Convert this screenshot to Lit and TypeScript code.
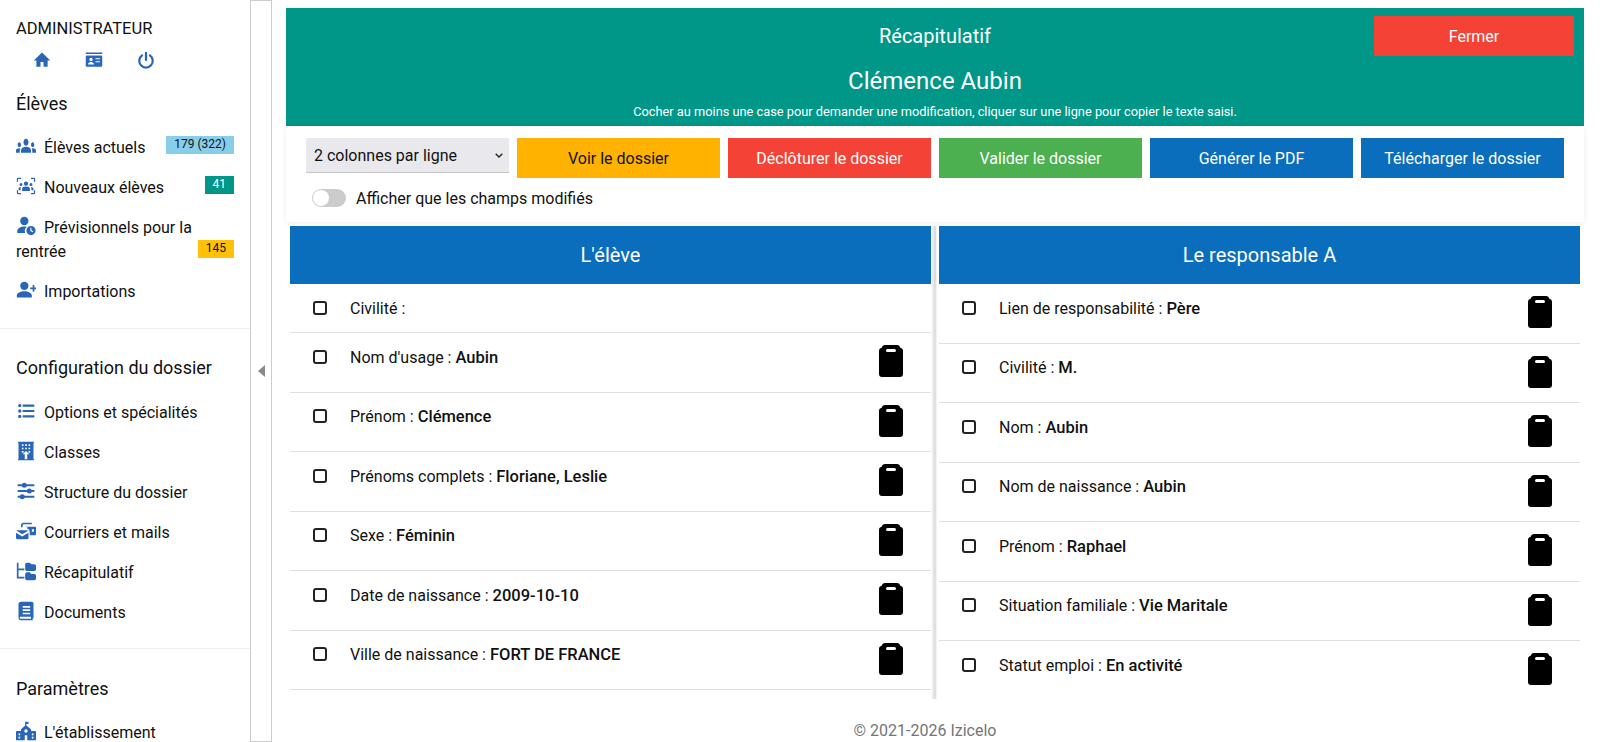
import { LitElement, html, css, svg } from "lit";
import { customElement } from "lit/decorators.js";

// ------ Icônes du menu ----- //
const icons = {
    home: svg`<path d="M10 21v-6.500h4V21h5.500v-8.500H23L12 2 1 12.500h3.500V21z"/>`,
    card: svg`<path fill-rule="evenodd" d="M1 2h22v2H1zM2.500 6h19A1.500 1.500 0 0 1 23 7.500v12a1.500 1.500 0 0 1-1.500 1.500h-19A1.500 1.500 0 0 1 1 19.500v-12A1.500 1.500 0 0 1 2.500 6zM8 9a2.200 2.200 0 1 0 0 4.400A2.200 2.200 0 0 0 8 9zM4 18h8c0-2-1.800-3.200-4-3.200S4 16 4 18zm10-8.500V11h6V9.500zm0 4V15h6v-1.500z"/>`,
    power: svg`<path fill="none" stroke="currentColor" stroke-width="3" stroke-linecap="round" d="M12 2.500V12M6.800 5.800a9 9 0 1 0 10.400 0"/>`,
    groups: svg`<g transform="translate(0 -5) scale(1 1.400)"><path d="M12 12.750c1.630 0 3.070.39 4.240.9 1.080.48 1.760 1.560 1.760 2.730V18H6v-1.610c0-1.180.68-2.260 1.760-2.730 1.170-.52 2.610-.91 4.240-.91zM4 13c1.100 0 2-.9 2-2s-.9-2-2-2-2 .9-2 2 .9 2 2 2zm1.130 1.100C4.760 14.040 4.390 14 4 14c-.99 0-1.930.21-2.780.58C.48 14.900 0 15.620 0 16.430V18h4.500v-1.610c0-.83.23-1.610.63-2.290zM20 13c1.100 0 2-.9 2-2s-.9-2-2-2-2 .9-2 2 .9 2 2 2zm4 3.430c0-.81-.48-1.530-1.220-1.850-.85-.37-1.790-.58-2.780-.58-.39 0-.76.04-1.130.1.400.68.630 1.460.630 2.290V18H24v-1.570zM12 6c1.660 0 3 1.340 3 3s-1.340 3-3 3-3-1.340-3-3 1.340-3 3-3z"/></g>`,
    scan: svg`<path d="M1 7V3.500A1.500 1.500 0 0 1 2.500 2H6v1.500H2.500V7zM18 2h3.500A1.500 1.500 0 0 1 23 3.500V7h-1.500V3.500H18zM1 17h1.500v3.500H6V22H2.500A1.500 1.500 0 0 1 1 20.500zM21.500 17H23v3.500a1.500 1.500 0 0 1-1.500 1.500H18v-1.500h3.500z"/><path d="M12 12.500c1.400 0 2.500.3 3.400.7.800.4 1.300 1.200 1.300 2.100V18H7.300v-2.700c0-.9.500-1.700 1.300-2.100.9-.4 2-.7 3.400-.7zM12 6.500a2.600 2.600 0 1 1 0 5.200 2.600 2.600 0 0 1 0-5.200zM6 8.500a1.800 1.800 0 1 1 0 3.600 1.800 1.800 0 0 1 0-3.600zm12 0a1.800 1.800 0 1 1 0 3.600 1.800 1.800 0 0 1 0-3.600zM3 17v-1.500c0-1.300 1-2.300 3-2.400-.3.600-.4 1.300-.4 2V17zm18 0v-1.500c0-1.300-1-2.300-3-2.400.3.600.4 1.300.4 2V17z"/>`,
    clock: svg`<circle cx="10" cy="6" r="5"/><path d="M10 12.500c1 0 2 .1 2.900.4A7 7 0 0 0 11 20.500H1.500V18c0-3.300 4-5.500 8.500-5.500z"/><path fill-rule="evenodd" d="M18 12a5.500 5.500 0 1 1 0 11 5.500 5.500 0 0 1 0-11zm-.8 2.200v3.700l3 1.500.6-1.200-2.300-1.100v-2.900z"/>`,
    add: svg`<circle cx="10" cy="7" r="5"/><path d="M10 13.500c4.500 0 9 2 9 5V21H1v-2.500c0-3 4.500-5 9-5zM20 6h2v3h2v2h-2v3h-2v-3h-3V9h3z"/>`,
    list: svg`<circle cx="4.500" cy="5.500" r="2"/><circle cx="4.500" cy="12" r="2"/><circle cx="4.500" cy="18.500" r="2"/><path d="M8 4.200h14v2.600H8zM8 10.700h14v2.600H8zM8 17.200h14v2.600H8z"/>`,
    building: svg`<path fill-rule="evenodd" d="M2.500 1h19v1.500H21v19h.5V23h-19v-1.500H3v-19h-.5zM7 4v2h2V4zm4 0v2h2V4zm4 0v2h2V4zM7 8v2h2V8zm4 0v2h2V8zm4 0v2h2V8zM7 12v2h2v-2zm8 0v2h2v-2zm-3 0-4 4h2.500v6h3v-6H16z"/>`,
    tune: svg`<path d="M2 3.800h20v2.400H2zM2 10.800h20v2.400H2zM2 17.800h20v2.400H2z"/><circle cx="10" cy="5" r="3"/><circle cx="16" cy="12" r="3"/><circle cx="7.500" cy="19" r="3"/>`,
    mail: svg`<path d="M6 7.500V5a3 3 0 0 1 3-3h10v2H9a1 1 0 0 0-1 1v2.500z"/><path fill-rule="evenodd" d="M11.500 7H23a1 1 0 0 1 1 1v8a1 1 0 0 1-1 1h-6.500v-4a4 4 0 0 0-3-3.900V8a1 1 0 0 0-2-1zM19 10v3h2.500v-3z"/><path d="M1 11h12a2 2 0 0 1 1.500.7L7.500 16 .3 11.500A1.500 1.500 0 0 1 1 11zM0 14l7.500 4.500L15 14v6a2 2 0 0 1-2 2H2a2 2 0 0 1-2-2z"/>`,
    tree: svg`<path d="M1 2h2v7h7v2H3v8h7v2H1z"/><path d="M13 2h3.500l2 2H22a2 2 0 0 1 2 2v4a2 2 0 0 1-2 2h-9a2 2 0 0 1-2-2V4a2 2 0 0 1 2-2zM13 13.500h3.500l2 2H22a2 2 0 0 1 2 2V21a2 2 0 0 1-2 2h-9a2 2 0 0 1-2-2v-5.500a2 2 0 0 1 2-2z"/>`,
    book: svg`<path fill-rule="evenodd" d="M6 1h13a2 2 0 0 1 2 2v17a1 1 0 0 1-1 1v2H6a3 3 0 0 1-3-3V4a3 3 0 0 1 3-3zm2 5v2h9V6zm0 4v2h9v-2zm0 4v2h9v-2zM5.500 19a1 1 0 0 0 0 2.200H18V19z"/>`,
    school: svg`<path fill-rule="evenodd" d="M11 1h4v2.500h-2.500v2L18 10v2h5a1 1 0 0 1 1 1v10H0V13a1 1 0 0 1 1-1h5v-2l5-4.500zM12 10a2 2 0 1 0 0 4 2 2 0 0 0 0-4zm-1.500 7v6h3v-6zM3 15v2h2v-2zm0 4v2h2v-2zm16-4v2h2v-2zm0 4v2h2v-2z"/>`,
};

const icon = (name: keyof typeof icons, cls = "icon") =>
    html`<svg class=${cls} viewBox="0 0 24 24" fill="currentColor">${icons[name]}</svg>`;

const clipboard = html`<svg class="clip" viewBox="0 0 24 32">
    <path d="M6 0h12c2 0 3 1.500 3.300 2.800C23 3 24 4.500 24 6v23c0 1.800-1.200 3-3 3H3c-1.800 0-3-1.200-3-3V6c0-1.500 1-3 2.700-3.200C3 1.500 4 0 6 0z"/>
    <rect x="7" y="4" width="10" height="3" rx="1.500" fill="#fff"/>
</svg>`;

const eleve = [
    ["Civilité :", ""],
    ["Nom d'usage :", "Aubin"],
    ["Prénom :", "Clémence"],
    ["Prénoms complets :", "Floriane, Leslie"],
    ["Sexe :", "Féminin"],
    ["Date de naissance :", "2009-10-10"],
    ["Ville de naissance :", "FORT DE FRANCE"],
];

const responsable = [
    ["Lien de responsabilité :", "Père"],
    ["Civilité :", "M."],
    ["Nom :", "Aubin"],
    ["Nom de naissance :", "Aubin"],
    ["Prénom :", "Raphael"],
    ["Situation familiale :", "Vie Maritale"],
    ["Statut emploi :", "En activité"],
];

@customElement("app-root")
export class AppRoot extends LitElement {
    renderItem(name: keyof typeof icons, label: string, badge?: string, badgeClass = "") {
        return html`<a class="item">${icon(name)}${label}${badge
            ? html`<span class="badge ${badgeClass}">${badge}</span>`
            : ""}</a>`;
    }

    renderRows(rows: string[][]) {
        return rows.map(([label, value]) => html`
            <div class="row ${value ? "" : "empty"}">
                <input type="checkbox" />
                <span class="field">${label} <b>${value}</b></span>
                ${value ? clipboard : ""}
            </div>
        `);
    }

    render() {
        return html`
            <nav class="sidebar">
                <div class="user">ADMINISTRATEUR</div>
                <div class="shortcuts">
                    <span>${icon("home", "sm")}</span>
                    <span>${icon("card", "sm")}</span>
                    <span>${icon("power", "sm")}</span>
                </div>

                <h3 class="first">Élèves</h3>
                <div class="items">
                    ${this.renderItem("groups", "Élèves actuels", "179 (322)", "sky")}
                    ${this.renderItem("scan", "Nouveaux élèves", "41", "teal")}
                    ${this.renderItem("clock", "Prévisionnels pour la rentrée", "145", "amber")}
                    ${this.renderItem("add", "Importations")}
                </div>
                <hr />

                <h3>Configuration du dossier</h3>
                <div class="items">
                    ${this.renderItem("list", "Options et spécialités")}
                    ${this.renderItem("building", "Classes")}
                    ${this.renderItem("tune", "Structure du dossier")}
                    ${this.renderItem("mail", "Courriers et mails")}
                    ${this.renderItem("tree", "Récapitulatif")}
                    ${this.renderItem("book", "Documents")}
                </div>
                <hr class="second" />

                <h3 class="third">Paramètres</h3>
                <div class="items">
                    ${this.renderItem("school", "L'établissement")}
                </div>
            </nav>

            <div class="rail"><span class="arrow"></span></div>

            <main class="main">
                <header class="banner">
                    <div class="banner-top">
                        <span class="title">Récapitulatif</span>
                        <button class="btn red">Fermer</button>
                    </div>
                    <div class="student">Clémence Aubin</div>
                    <div class="hint">Cocher au moins une case pour demander une modification, cliquer sur une ligne pour copier le texte saisi.</div>
                </header>

                <section class="toolbar">
                    <div class="actions">
                        <select>
                            <option>2 colonnes par ligne</option>
                        </select>
                        <button class="btn orange">Voir le dossier</button>
                        <button class="btn red">Déclôturer le dossier</button>
                        <button class="btn green">Valider le dossier</button>
                        <button class="btn blue">Générer le PDF</button>
                        <button class="btn blue">Télécharger le dossier</button>
                    </div>
                    <label class="switch-row">
                        <span class="switch"><span class="knob"></span></span>
                        <span class="switch-label">Afficher que les champs modifiés</span>
                    </label>
                </section>

                <section class="columns">
                    <div class="col">
                        <div class="col-head">L'élève</div>
                        ${this.renderRows(eleve)}
                    </div>
                    <div class="sep"></div>
                    <div class="col">
                        <div class="col-head">Le responsable A</div>
                        ${this.renderRows(responsable)}
                    </div>
                </section>

                <footer class="footer">© 2021-2026 Izicelo</footer>
            </main>
        `;
    }

    static styles = css`
        :host {
            display: flex;
            height: 742px;
            overflow: hidden;
            background: #fff;
            color: #111;
            font-family: Roboto, "Liberation Sans", sans-serif;
            font-size: 16px;
            line-height: 24px;
        }

        /* ------ Menu latéral ----- */
        .sidebar {
            width: 250px;
            flex: none;
            box-sizing: border-box;
            padding: 17px 16px 0;
            overflow: hidden;
        }

        .user {
            font-size: 16.5px;
        }

        .shortcuts {
            display: flex;
            height: 24px;
            margin-top: 7px;
            color: #2a66b8;
        }

        .shortcuts span {
            width: 52px;
            display: flex;
            align-items: center;
            justify-content: center;
        }

        .sm {
            width: 18px;
            height: 18px;
        }

        h3 {
            margin: 27px 0 21px;
            font-size: 18px;
            font-weight: 400;
            line-height: 24px;
        }

        h3.first {
            margin: 20px 0 20px;
        }

        h3.third {
            margin: 28px 0 20px;
        }

        .items {
            display: flex;
            flex-direction: column;
            gap: 16px;
        }

        .item {
            display: block;
        }

        .icon {
            width: 20px;
            height: 20px;
            margin-right: 8px;
            vertical-align: -3px;
            color: #2a66b8;
        }

        .badge {
            float: right;
            height: 18px;
            padding: 0 8px;
            font-size: 12px;
            line-height: 17px;
        }

        .badge.sky { background: #87ceeb; }
        .badge.teal { background: #009688; color: #fff; }
        .badge.amber { background: #ffc107; }

        hr {
            margin: 24px -16px 0;
            border: none;
            border-top: 1px solid #eee;
        }

        hr.second {
            margin-top: 23px;
        }

        .rail {
            width: 22px;
            flex: none;
            box-sizing: border-box;
            border: 1px solid #ccc;
            display: flex;
            align-items: center;
            justify-content: center;
        }

        .arrow {
            width: 0;
            height: 0;
            border-top: 6px solid transparent;
            border-bottom: 6px solid transparent;
            border-right: 7px solid #888;
        }

        /* ------ Contenu ----- */
        .main {
            flex: 1;
            min-width: 0;
            display: flex;
            flex-direction: column;
            box-sizing: border-box;
            padding: 8px 16px 0 14px;
        }

        .banner {
            background: #009688;
            color: #fff;
            text-align: center;
        }

        .banner-top {
            display: grid;
            grid-template-columns: 210px 1fr 210px;
            align-items: center;
            padding-top: 8px;
        }

        .banner-top .title {
            grid-column: 2;
            font-size: 20px;
        }

        .banner-top .btn {
            width: 200px;
        }

        .student {
            margin-top: 9px;
            font-size: 24px;
            line-height: 32px;
        }

        .hint {
            margin-top: 7px;
            padding-bottom: 6px;
            font-size: 12.8px;
            line-height: 16px;
        }

        .btn {
            height: 40px;
            border: none;
            border-radius: 0;
            padding: 2px 0 0;
            color: #fff;
            font: inherit;
            cursor: pointer;
        }

        .red { background: #f44336; }
        .orange { background: #ffb300; color: #111; }
        .green { background: #4caf50; }
        .blue { background: #0a6ebd; }

        .toolbar {
            padding: 12px 20px;
            background: #fff;
            box-shadow: 0 1px 6px rgba(0, 0, 0, 0.08);
        }

        .actions {
            display: grid;
            grid-template-columns: repeat(6, 203px);
            gap: 8px;
            align-items: start;
        }

        select {
            appearance: none;
            height: 35px;
            border: none;
            border-bottom: 1px solid #c4c4c4;
            border-radius: 0;
            padding: 2px 8px 0;
            background: #e9e9ed url("data:image/svg+xml,%3Csvg xmlns='http://www.w3.org/2000/svg' width='8' height='5'%3E%3Cpath d='M.7.7 4 4 7.300.7' fill='none' stroke='%23222' stroke-width='1.300'/%3E%3C/svg%3E") no-repeat right 6px center;
            color: #111;
            font: inherit;
        }

        .switch-row {
            display: flex;
            align-items: center;
            gap: 10px;
            height: 24px;
            margin: 8px 0 0 6px;
        }

        .switch-label {
            padding-top: 2px;
        }

        .switch {
            width: 34px;
            height: 18px;
            border-radius: 9px;
            background: #ccc;
            display: flex;
            align-items: center;
        }

        .knob {
            width: 16px;
            height: 16px;
            margin-left: 1px;
            border-radius: 50%;
            background: #fff;
        }

        .columns {
            flex: 1;
            min-height: 0;
            display: grid;
            grid-template-columns: 1fr 8px 1fr;
            margin-top: 4px;
            padding: 0 4px;
            overflow: hidden;
        }

        .sep {
            background: linear-gradient(to right, #fff 0, #ececec 2px, #d9d9d9 4px, #e6e6e6 5px, #fff 6px);
        }

        .col {
            min-width: 0;
        }

        .col-head {
            height: 58px;
            background: #0a6ebd;
            color: #fff;
            font-size: 20px;
            line-height: 58px;
            text-align: center;
        }

        .row {
            display: flex;
            align-items: flex-start;
            box-sizing: border-box;
            height: 59.5px;
            padding: 12.9px 28px 0 23px;
            border-bottom: 1px solid #e0e0e0;
        }

        .row.empty {
            height: 49px;
        }

        input[type="checkbox"] {
            appearance: none;
            flex: none;
            box-sizing: border-box;
            width: 14px;
            height: 14px;
            margin: 4px 23px 0 0;
            border: 2px solid #222;
            border-radius: 3px;
            background: #fff;
        }

        .field {
            flex: 1;
            min-width: 0;
        }

        .field b {
            font-size: 16.5px;
            font-weight: 500;
        }

        .clip {
            flex: none;
            width: 24px;
            height: 32px;
            margin-top: -0.5px;
        }

        .footer {
            flex: none;
            height: 43px;
            box-sizing: border-box;
            padding: 20px 20px 0 0;
            color: #757575;
            text-align: center;
        }
    `;
}
